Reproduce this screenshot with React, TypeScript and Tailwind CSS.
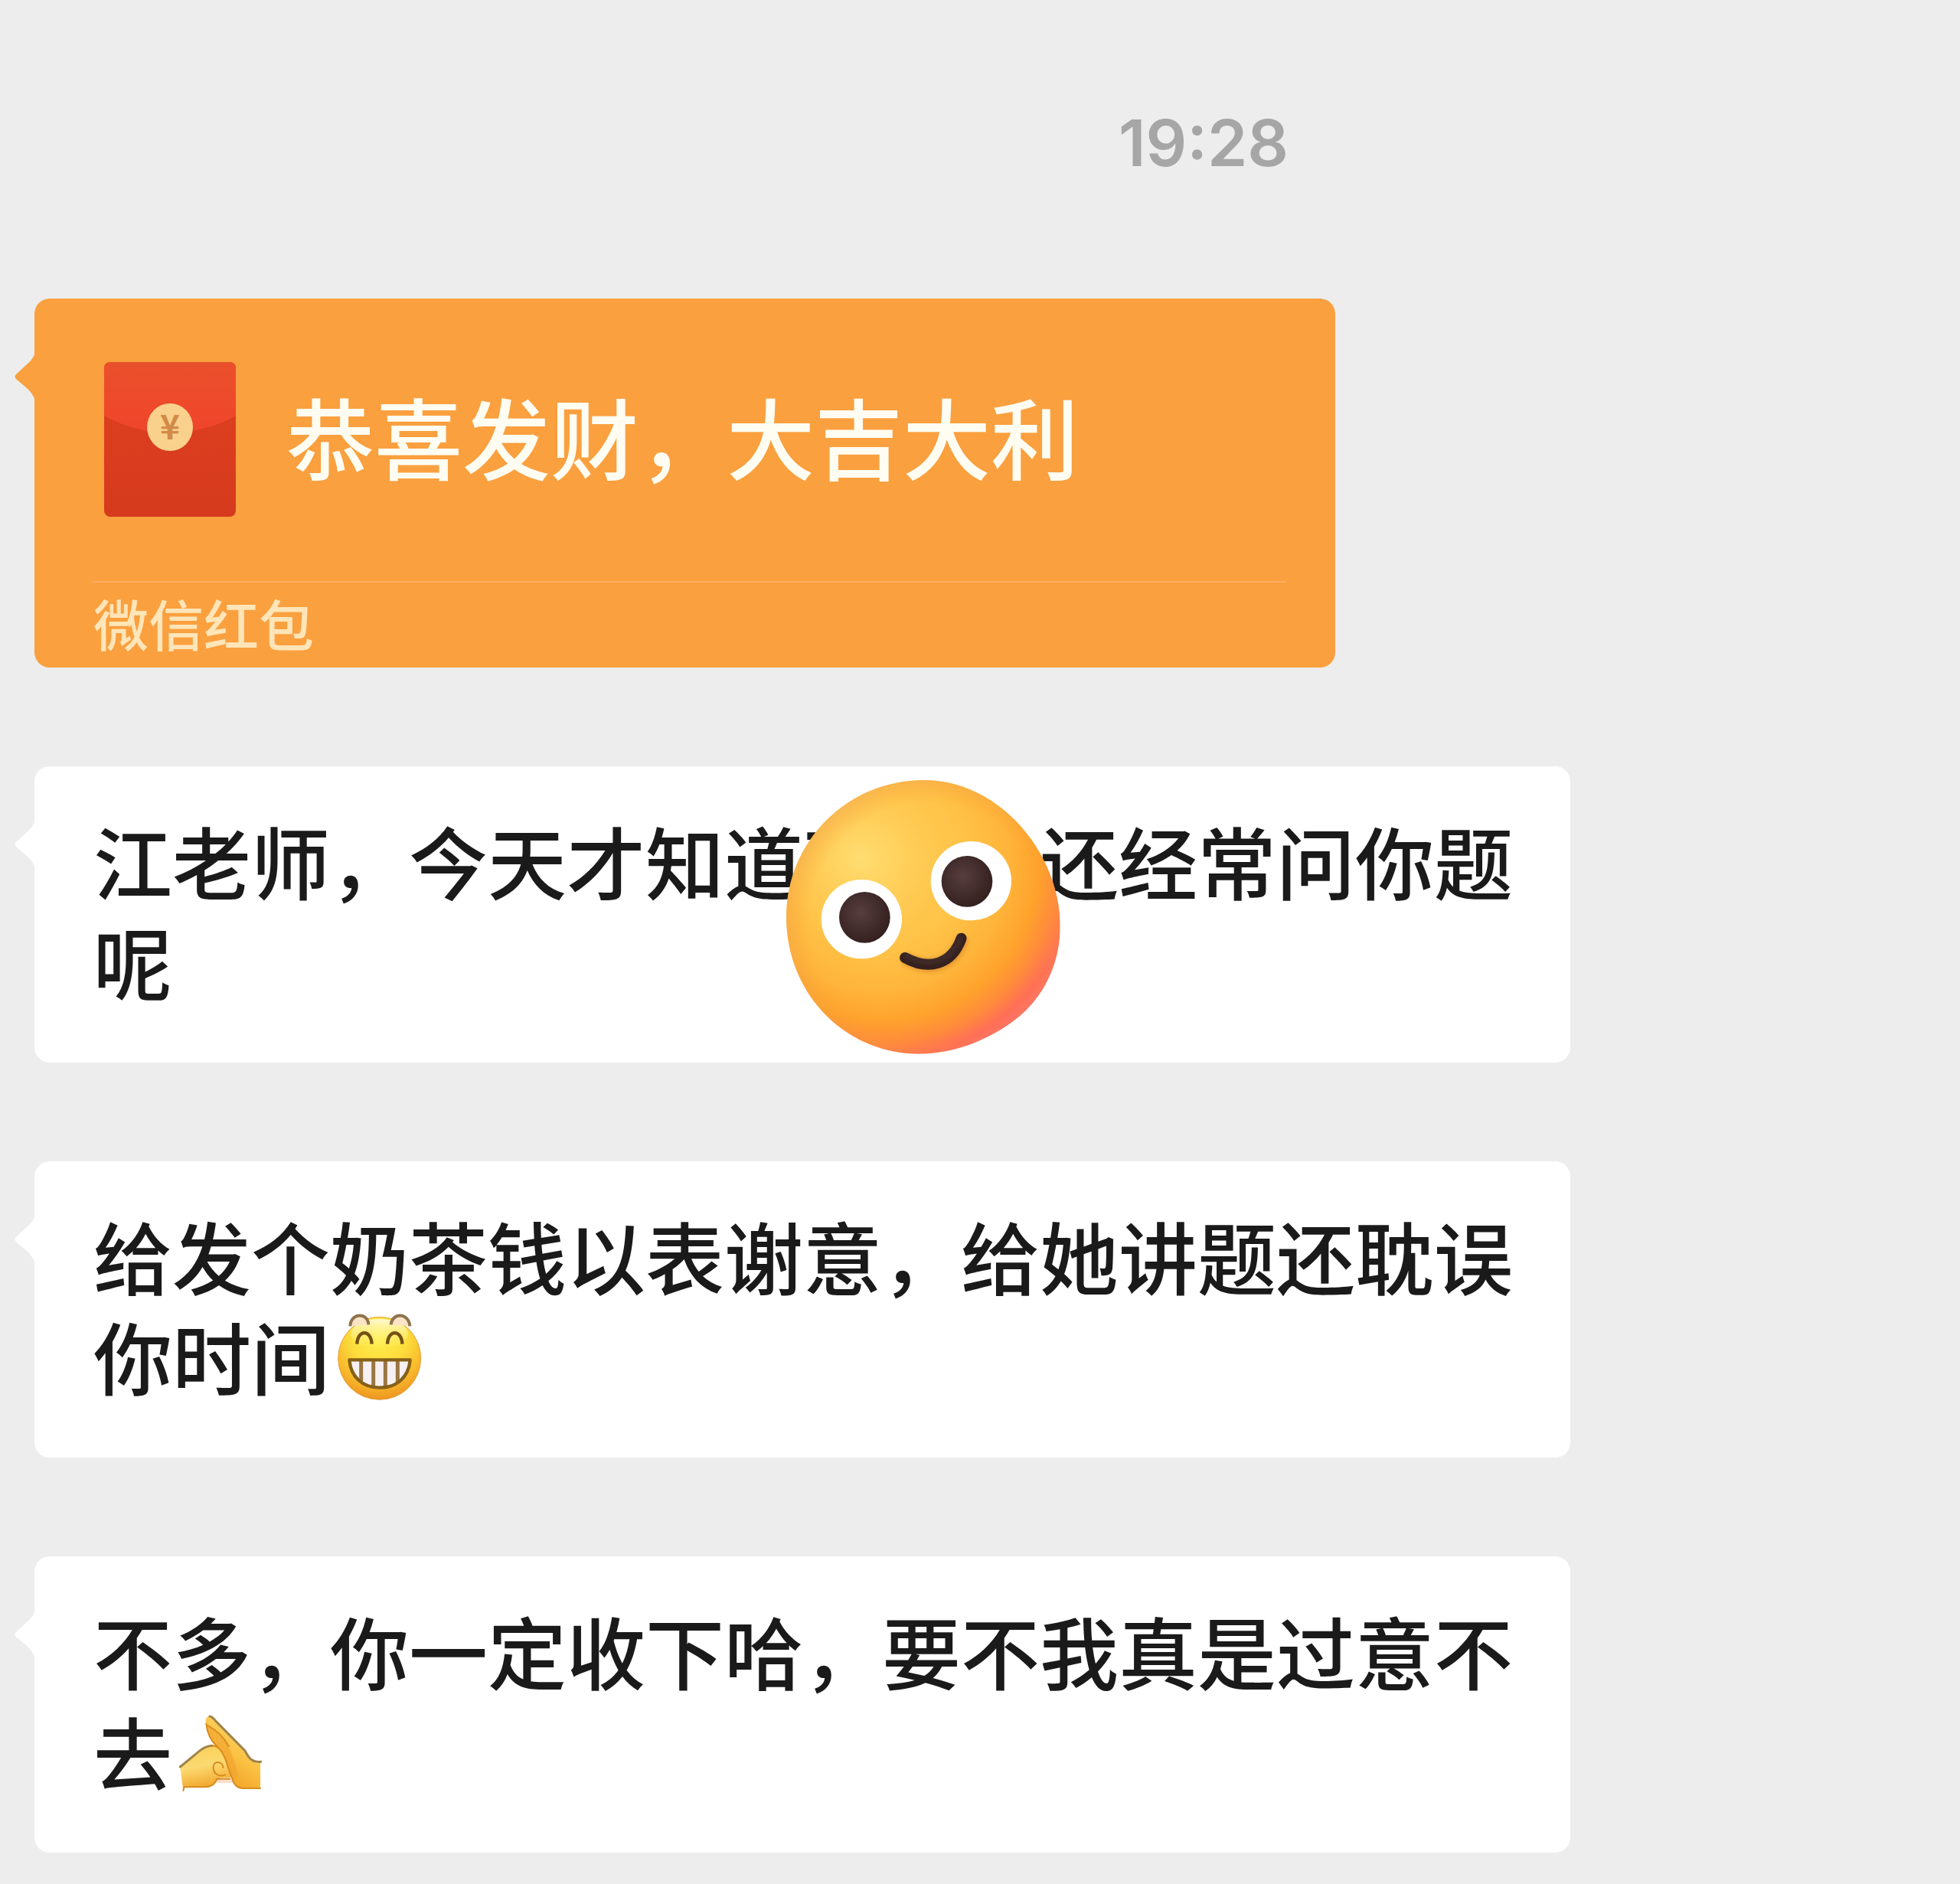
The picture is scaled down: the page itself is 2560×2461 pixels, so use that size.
import type { ReactNode } from 'react'

interface Message {
  id: number
  text: string
  emoji?: ReactNode
  sticker?: ReactNode
}

function BubbleTail({ className }: { className: string }) {
  return (
    <svg viewBox="0 0 28 70" className={`absolute top-[67px] -left-[26px] h-[70px] w-[28px] ${className}`} aria-hidden="true">
      <path d="M28 0 C26 8 22 14 16 19 L3 31 Q-2 35 3 39 L16 50 C22 55 26 62 28 70 Z" fill="currentColor" />
    </svg>
  )
}

function RedPacketIcon() {
  return (
    <svg viewBox="0 0 172 202" className="h-[202px] w-[172px] shrink-0" aria-hidden="true">
      <defs>
        <linearGradient id="packet-body" x1="0" y1="0" x2="0" y2="1">
          <stop offset="0.3" stopColor="#dc3f20" />
          <stop offset="1" stopColor="#d63a1c" />
        </linearGradient>
        <linearGradient id="packet-flap" x1="0" y1="0" x2="0" y2="1">
          <stop offset="0" stopColor="#ea502b" />
          <stop offset="1" stopColor="#f0452b" />
        </linearGradient>
      </defs>
      <rect width="172" height="202" rx="8" fill="url(#packet-body)" />
      <path d="M0 8 Q0 0 8 0 H164 Q172 0 172 8 V70 Q132 92 86 92 Q40 92 0 70 Z" fill="url(#packet-flap)" />
      <ellipse cx="86" cy="85" rx="30" ry="31" fill="#f9d08c" />
      <text
        x="86"
        y="101"
        textAnchor="middle"
        fontSize="44"
        fontWeight="700"
        fill="#d28a48"
        fontFamily="'Noto Sans CJK SC', sans-serif"
      >
        ¥
      </text>
    </svg>
  )
}

function GrinEmoji() {
  return (
    <svg viewBox="57 84 336 336" className="ml-2 inline-block h-[112px] w-[112px] overflow-visible align-[-14px]" role="img" aria-label="呲牙">
      <defs>
        <radialGradient id="grin-face" gradientUnits="userSpaceOnUse" cx="225" cy="170" r="250">
          <stop offset="0" stopColor="#fff04f" />
          <stop offset="0.45" stopColor="#fcdc3c" />
          <stop offset="0.75" stopColor="#f8b92b" />
          <stop offset="1" stopColor="#ee9420" />
        </radialGradient>
        <linearGradient id="grin-shine" x1="0" y1="0" x2="0" y2="1">
          <stop offset="0" stopColor="#fffbe0" stopOpacity="0.9" />
          <stop offset="1" stopColor="#fff680" stopOpacity="0" />
        </linearGradient>
      </defs>
      <circle cx="227" cy="256" r="162" fill="url(#grin-face)" stroke="#e0a040" strokeWidth="3" />
      <ellipse cx="227" cy="160" rx="112" ry="58" fill="url(#grin-shine)" />
      <path d="M112 130 C114 76 182 76 184 124" fill="#fbe3c6" stroke="#8e744c" strokeWidth="12" />
      <path d="M272 124 C276 76 342 76 346 130" fill="#fbe3c6" stroke="#8e744c" strokeWidth="12" />
      <path d="M139 200 C141 142 194 142 197 200" fill="none" stroke="#745016" strokeWidth="13" />
      <path d="M258 200 C260 142 314 142 316 200" fill="none" stroke="#745016" strokeWidth="13" />
      <path d="M109 262 H347 C342 326 298 371 228 371 C158 371 114 326 109 262 Z" fill="#f6f0f2" />
      <path d="M155 264 V346 M203 264 V368 M250 264 V368 M298 264 V348" stroke="#9b7642" strokeWidth="15" />
      <path
        d="M109 262 H347 C342 326 298 371 228 371 C158 371 114 326 109 262 Z"
        fill="none"
        stroke="#866018"
        strokeWidth="13"
        strokeLinejoin="round"
      />
    </svg>
  )
}

function SaluteEmoji() {
  return (
    <svg viewBox="69 72 336 336" className="ml-2 inline-block h-[112px] w-[112px] align-[-14px]" role="img" aria-label="抱拳">
      <defs>
        <linearGradient id="hand-left" x1="0.3" y1="0" x2="0.5" y2="1">
          <stop offset="0" stopColor="#f9cf58" />
          <stop offset="0.45" stopColor="#fcda72" />
          <stop offset="1" stopColor="#ef9f22" />
        </linearGradient>
        <linearGradient id="hand-right" x1="1" y1="0" x2="0.5" y2="1">
          <stop offset="0" stopColor="#ffe07c" />
          <stop offset="0.6" stopColor="#fbc244" />
          <stop offset="1" stopColor="#f2a325" />
        </linearGradient>
      </defs>
      <path
        d="M176 124 C174 96 192 92 206 108 L330 232 C346 260 356 278 390 278 V382 H318 C296 378 286 366 280 342 L220 216 C196 196 184 164 176 124 Z"
        fill="url(#hand-right)"
      />
      <path d="M178 130 C206 150 236 176 262 214 C274 236 290 270 306 334 L280 346 L220 216 C196 196 184 164 178 130 Z" fill="#f0a22e" fillOpacity="0.6" />
      <path
        d="M76 296 L150 236 C182 208 218 208 238 236 C256 264 268 300 276 340 H238 C226 344 222 350 216 358 C206 372 194 376 176 376 H92 L88 390 Z"
        fill="url(#hand-left)"
      />
      <path d="M222 341 H278 L288 360 L214 360 Z" fill="#f7c9ac" fillOpacity="0.6" />
      <path
        d="M76 297 L150 236 C166 222 182 215 202 214 M192 99 C202 100 208 110 216 118 L330 234 C344 260 354 280 392 277"
        fill="none"
        stroke="#a0854a"
        strokeWidth="9"
        strokeLinecap="round"
      />
      <path
        d="M202 214 C232 216 244 244 256 274 C264 300 270 320 280 342 C286 368 300 380 322 381 H390 M88 390 L92 376 H176 C206 374 214 358 220 344 H270 M244 300 C244 276 208 270 206 296 C204 324 228 338 252 328 M178 128 C182 164 196 196 220 216 M182 134 C212 150 244 176 266 216"
        fill="none"
        stroke="#d98b1c"
        strokeWidth="6"
        strokeLinecap="round"
      />
    </svg>
  )
}

function SmileSticker() {
  return (
    <svg viewBox="82 86 1074 1074" className="absolute top-[18px] left-[982px] h-[358px] w-[358px]" role="img" aria-label="微笑">
      <defs>
        <radialGradient id="smile-face" gradientUnits="userSpaceOnUse" cx="450" cy="410" r="840">
          <stop offset="0" stopColor="#ffcd56" />
          <stop offset="0.4" stopColor="#ffc348" />
          <stop offset="0.6" stopColor="#ffb43a" />
          <stop offset="0.74" stopColor="#ffa22c" />
          <stop offset="0.84" stopColor="#ff8a3c" />
          <stop offset="0.92" stopColor="#ff6e58" />
          <stop offset="1" stopColor="#ff6c7c" />
        </radialGradient>
        <radialGradient id="smile-glow" gradientUnits="userSpaceOnUse" cx="370" cy="390" r="330">
          <stop offset="0" stopColor="#ffe27a" stopOpacity="0.8" />
          <stop offset="1" stopColor="#ffd05a" stopOpacity="0" />
        </radialGradient>
        <radialGradient id="smile-rim" gradientUnits="userSpaceOnUse" cx="640" cy="644" r="570">
          <stop offset="0.82" stopColor="#f59a2c" stopOpacity="0" />
          <stop offset="1" stopColor="#f0a050" stopOpacity="0.45" />
        </radialGradient>
        <radialGradient id="smile-pupil" cx="0.42" cy="0.4" r="0.6">
          <stop offset="0" stopColor="#573d3f" />
          <stop offset="1" stopColor="#35211f" />
        </radialGradient>
        <filter id="smile-soft" x="-20%" y="-20%" width="140%" height="150%">
          <feGaussianBlur stdDeviation="9" />
        </filter>
        <clipPath id="smile-shape">
          <path d="M82 622 C82 326 322 86 622 86 C914 86 1155 370 1155 660 C1155 800 1095 925 1000 1008 C900 1094 750 1159 596 1159 C306 1155 82 918 82 622 Z" />
        </clipPath>
      </defs>
      <g clipPath="url(#smile-shape)">
        <rect x="82" y="86" width="1074" height="1074" fill="url(#smile-face)" />
        <rect x="82" y="86" width="1074" height="1074" fill="url(#smile-glow)" />
        <rect x="82" y="86" width="1074" height="1074" fill="url(#smile-rim)" />
      </g>
      <ellipse cx="377" cy="631" rx="158" ry="155" fill="#fff" />
      <ellipse cx="806" cy="481" rx="158" ry="155" fill="#fff" />
      <circle cx="389" cy="624" r="100" fill="url(#smile-pupil)" />
      <circle cx="790" cy="483" r="100" fill="url(#smile-pupil)" />
      <path
        d="M552 790 C640 840 735 821 772 716"
        fill="none"
        stroke="#c9782a"
        strokeOpacity="0.6"
        strokeWidth="40"
        strokeLinecap="round"
        filter="url(#smile-soft)"
      />
      <path d="M547 782 C638 832 730 812 768 706" fill="none" stroke="#35211f" strokeWidth="42" strokeLinecap="round" />
      <path
        d="M552 774 C640 818 722 798 762 704"
        fill="none"
        stroke="#6b4f49"
        strokeOpacity="0.5"
        strokeWidth="10"
        strokeLinecap="round"
        filter="url(#smile-soft)"
      />
    </svg>
  )
}

const MESSAGES: Message[] = [
  { id: 1, text: '江老师，今天才知道可可她还经常问你题呢', sticker: <SmileSticker /> },
  { id: 2, text: '给发个奶茶钱以表谢意，给她讲题还耽误你时间', emoji: <GrinEmoji /> },
  { id: 3, text: '不多，你一定收下哈，要不我真是过意不去', emoji: <SaluteEmoji /> },
]

function RedPacketCard() {
  return (
    <article className="relative w-full max-w-[1699px] rounded-[20px] bg-[#faa03f] pt-[83px]">
      <BubbleTail className="text-[#faa03f]" />
      <div className="flex items-center gap-[66px] pl-[91px]">
        <RedPacketIcon />
        <h2 className="pb-3 text-[115px] leading-[131px] font-medium text-[#fffdf2]">恭喜发财，大吉大利</h2>
      </div>
      <div className="mt-[84px] mr-16 ml-[75px] h-0.5 bg-[#fbae64]" />
      <p className="pb-2 pl-[77px] text-[72px] leading-[103px] font-medium text-[#ffe5b8]">微信红包</p>
    </article>
  )
}

function MessageBubble({ message }: { message: Message }) {
  return (
    <article className="relative w-full max-w-[2006px] rounded-[20px] bg-white pt-[57px] pr-[72px] pb-[68px] pl-[77px]">
      <BubbleTail className="text-white" />
      <p className="text-[103px] leading-[131px] font-medium text-[#1a1a1a]">
        {message.text}
        {message.emoji}
      </p>
      {message.sticker}
    </article>
  )
}

export default function ChatPage() {
  return (
    <main className="min-h-screen bg-[#ededed] pb-[41px] font-['Noto_Sans_CJK_SC',sans-serif]">
      {/* Time */}
      <div className="pt-[137px] pb-[153px] pl-[584px] text-center">
        <time className="block font-['Inter',sans-serif] text-[84px] leading-[100px] font-semibold text-[#a6a6a6]">19:28</time>
      </div>

      {/* Messages */}
      <div className="flex flex-col gap-[129px] pr-10 pl-[45px]">
        <RedPacketCard />
        {MESSAGES.map((message) => (
          <MessageBubble key={message.id} message={message} />
        ))}
      </div>
    </main>
  )
}
